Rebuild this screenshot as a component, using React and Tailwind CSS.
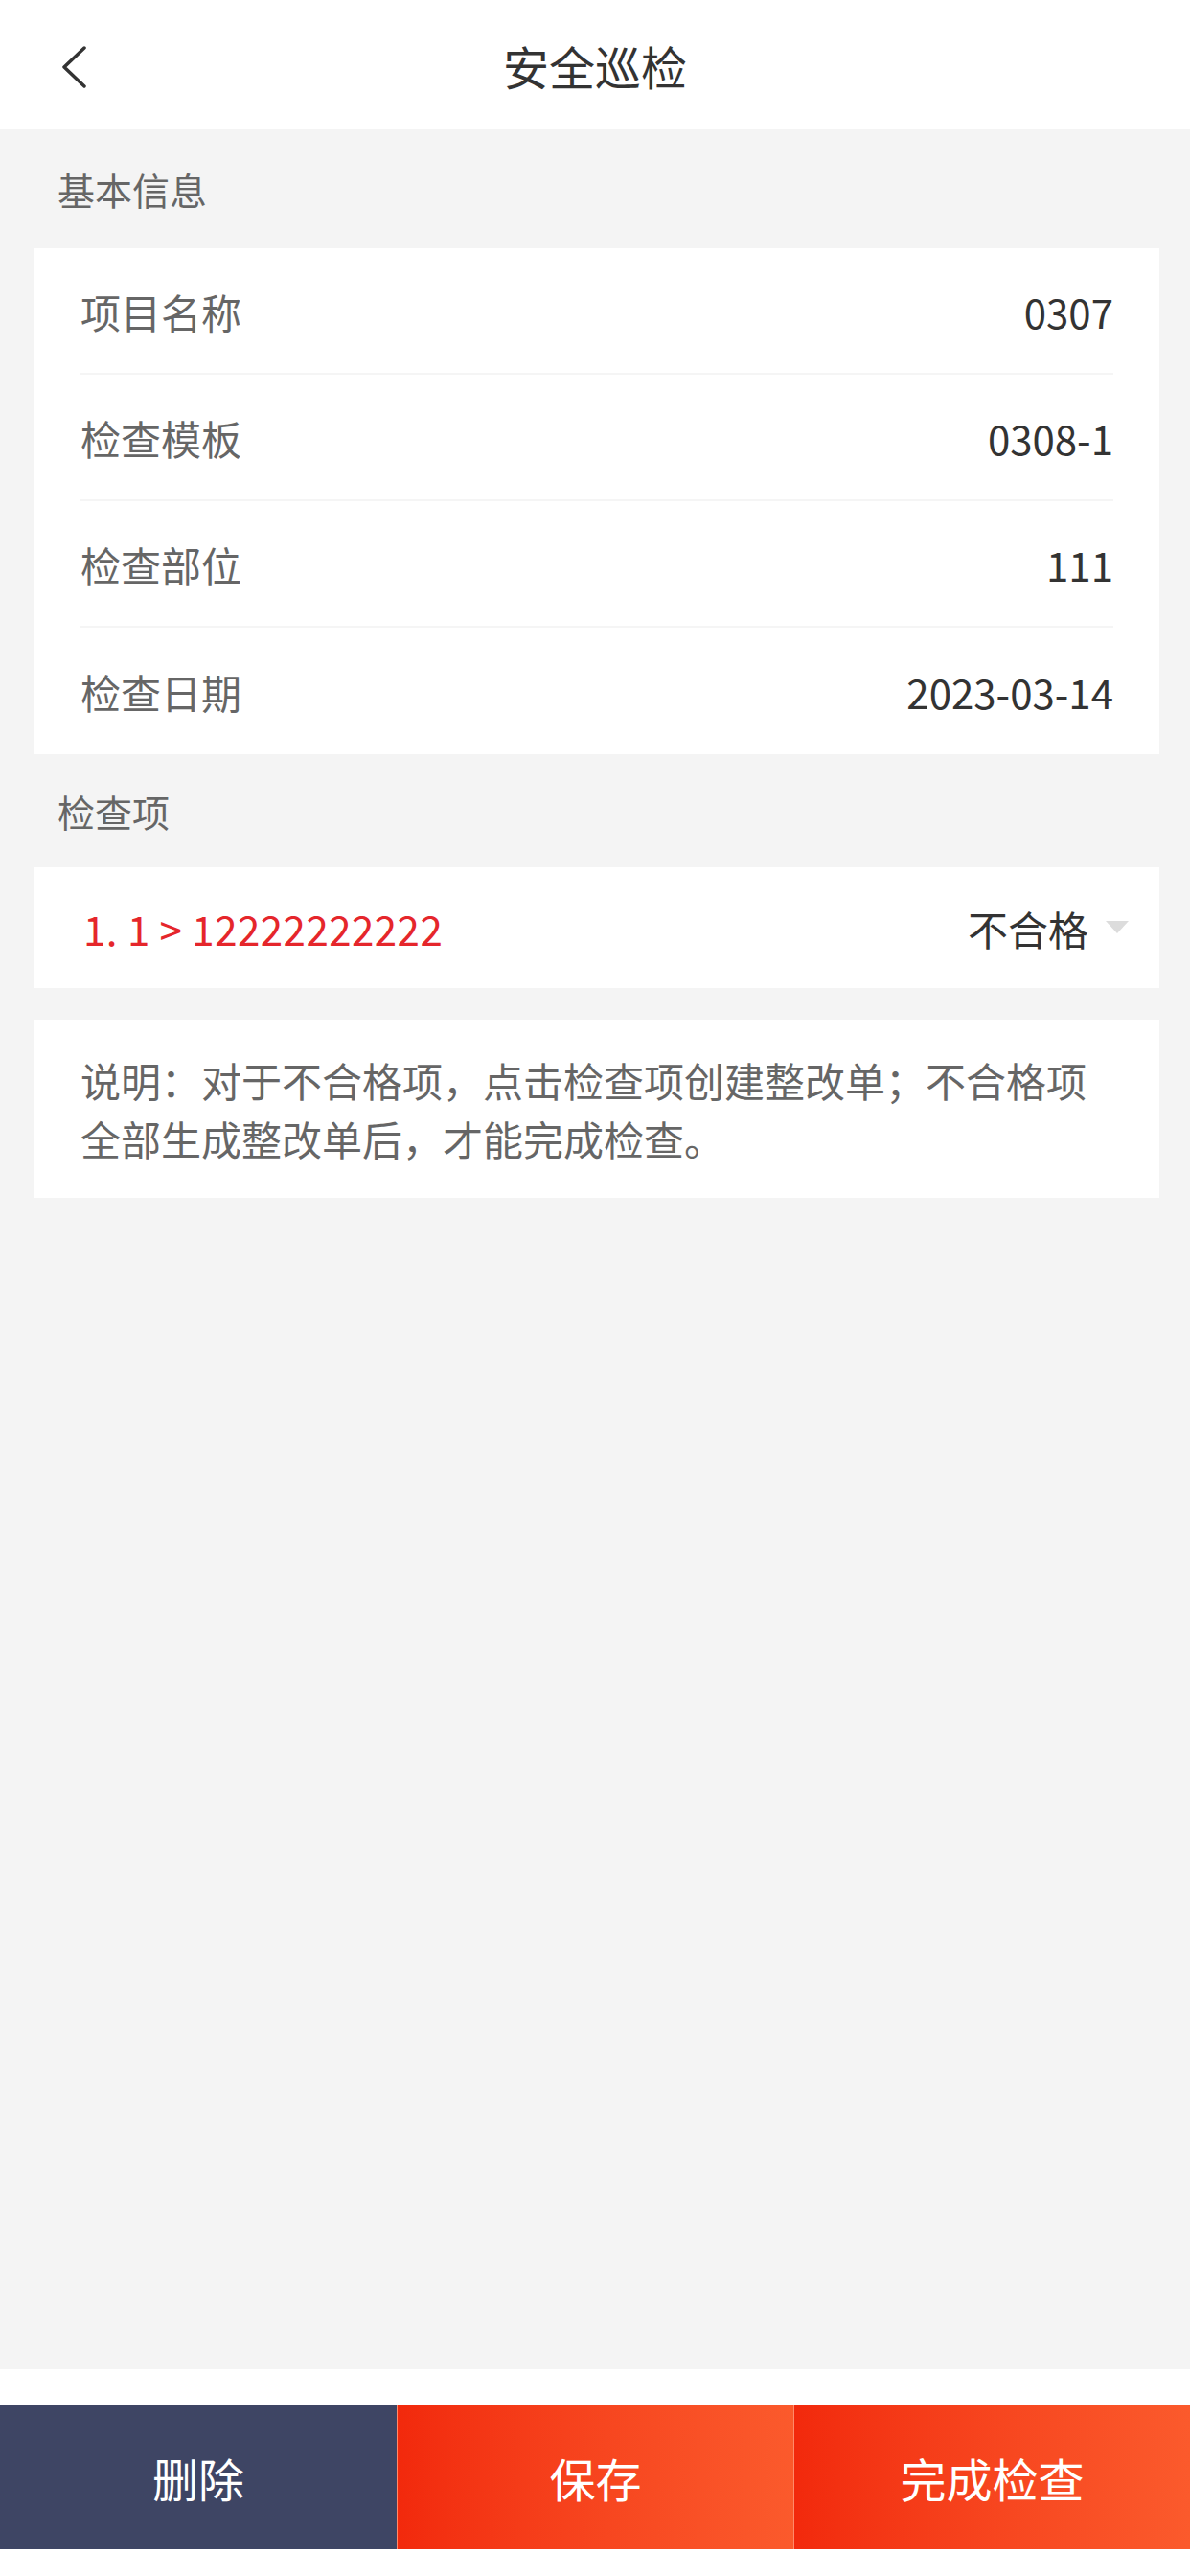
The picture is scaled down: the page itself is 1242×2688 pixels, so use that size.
const baseInfo = [
  { label: "项目名称", value: "0307" },
  { label: "检查模板", value: "0308-1" },
  { label: "检查部位", value: "111" },
  { label: "检查日期", value: "2023-03-14" },
];

// Section title on the grey background
function SectionTitle({ children, className = "" }) {
  return (
    <div className={`flex items-center pl-[60px] text-[39px] text-[#666666] ${className}`}>
      {children}
    </div>
  );
}

function InfoRow({ label, value, last }) {
  return (
    <div className="px-[48px]">
      <div
        className={`flex h-[132px] items-center justify-between ${
          last ? "" : "border-b-2 border-[#f5f5f5]"
        }`}
      >
        <span className="text-[42px] text-[#666666]">{label}</span>
        <span className="text-[42px] text-[#333333]">{value}</span>
      </div>
    </div>
  );
}

export default function App() {
  return (
    <div
      className="flex min-h-[2688px] flex-col bg-[#f4f4f4]"
      style={{ fontFamily: '"Noto Sans CJK SC", "Noto Sans", sans-serif' }}
    >
      {/* Header */}
      <header className="relative flex h-[135px] items-center justify-center bg-white">
        <button className="absolute left-[64px] top-[48px]">
          <svg width="26" height="44" viewBox="0 0 26 44" fill="none">
            <polyline
              points="24,2 3,22 24,42"
              stroke="#333333"
              strokeWidth="3.5"
              strokeLinecap="round"
              strokeLinejoin="round"
            />
          </svg>
        </button>
        <h1 className="text-[48px] font-normal text-[#333333]">安全巡检</h1>
      </header>

      {/* 基本信息 */}
      <SectionTitle className="h-[124px]">基本信息</SectionTitle>
      <div className="ml-[36px] mr-[32px] bg-white">
        {baseInfo.map((row, i) => (
          <InfoRow key={row.label} {...row} last={i === baseInfo.length - 1} />
        ))}
      </div>

      {/* 检查项 */}
      <SectionTitle className="h-[118px]">检查项</SectionTitle>
      <div className="ml-[36px] mr-[32px] flex h-[126px] items-center justify-between bg-white pl-[51px] pr-[32px]">
        <span className="text-[42px] tracking-[0.5px] text-[#e5262b]">1. 1 &gt; 12222222222</span>
        <div className="flex items-center gap-[18px]">
          <span className="text-[42px] text-[#333333]">不合格</span>
          <svg width="24" height="14" viewBox="0 0 24 14">
            <polygon points="0,0 24,0 12,13" fill="#dcdcdc" />
          </svg>
        </div>
      </div>

      <div className="ml-[36px] mr-[32px] mt-[33px] bg-white px-[48px] py-[32px] text-[42px] leading-[61px] text-[#666666]">
        说明：对于不合格项，点击检查项创建整改单；不合格项全部生成整改单后，才能完成检查。
      </div>

      <div className="flex-1" />

      {/* Bottom actions */}
      <footer className="bg-white pb-[28px] pt-[38px]">
        <div className="grid h-[150px] grid-cols-3">
          <button className="flex items-center justify-center bg-[#3e4564] text-[48px] text-white">
            删除
          </button>
          <button className="flex items-center justify-center border-l border-[#ff8a6a] bg-gradient-to-r from-[#f2290c] to-[#fb5a2c] text-[48px] text-white">
            保存
          </button>
          <button className="flex items-center justify-center border-l border-[#ff8a6a] bg-gradient-to-r from-[#f2290c] to-[#fb5a2c] text-[48px] text-white">
            完成检查
          </button>
        </div>
      </footer>
    </div>
  );
}
